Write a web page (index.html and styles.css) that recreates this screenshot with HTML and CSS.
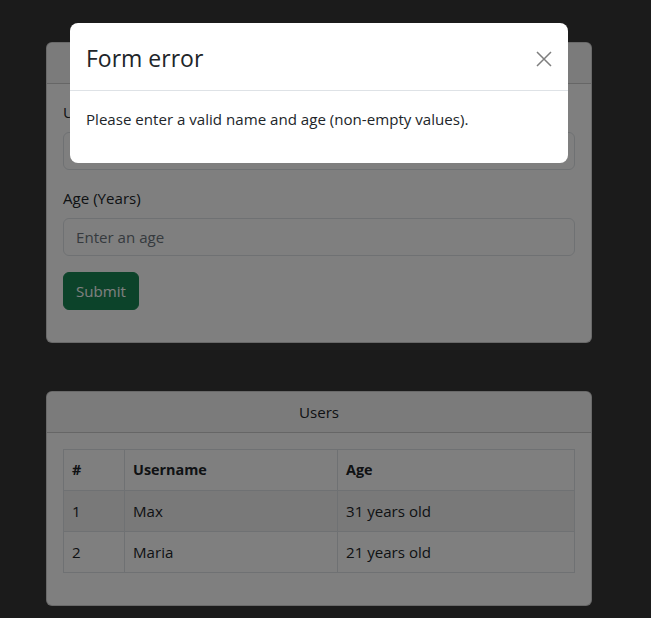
FILE: index.html
```html
<!DOCTYPE html>
<html lang="en">
<head>
    <meta charset="UTF-8">
    <meta name="viewport" content="width=device-width, initial-scale=1.0">
    <title>Users</title>
    <link rel="stylesheet" href="styles.css">
</head>
<body>
    <div class="container">
        <div class="card">
            <div class="card-header">Add User</div>
            <div class="card-body">
                <form id="userForm">
                    <div class="field">
                        <label for="username">Username</label>
                        <input type="text" id="username" class="input" placeholder="Enter a username">
                    </div>
                    <div class="field">
                        <label for="age">Age (Years)</label>
                        <input type="number" id="age" class="input" placeholder="Enter an age">
                    </div>
                    <div class="actions">
                        <button type="submit" class="button">Submit</button>
                    </div>
                </form>
            </div>
        </div>

        <div class="card">
            <div class="card-header">Users</div>
            <div class="card-body">
                <table class="users">
                    <thead>
                        <tr>
                            <th class="col-id">#</th>
                            <th class="col-name">Username</th>
                            <th>Age</th>
                        </tr>
                    </thead>
                    <tbody>
                        <tr>
                            <td>1</td>
                            <td>Max</td>
                            <td>31 years old</td>
                        </tr>
                        <tr>
                            <td>2</td>
                            <td>Maria</td>
                            <td>21 years old</td>
                        </tr>
                    </tbody>
                </table>
            </div>
        </div>
    </div>

    <!-- error modal -->
    <div class="backdrop"></div>
    <div class="modal">
        <div class="modal-dialog">
            <div class="modal-header">
                <h2 class="modal-title">Form error</h2>
                <button type="button" class="close" aria-label="Close">
                    <svg width="16" height="16" viewBox="0 0 16 16">
                        <path d="M1 1L15 15M15 1L1 15" stroke="#000" stroke-width="1.5" fill="none"/>
                    </svg>
                </button>
            </div>
            <div class="modal-body">
                <p>Please enter a valid name and age (non-empty values).</p>
            </div>
        </div>
    </div>
</body>
</html>
```

FILE: styles.css
```css
* {
    box-sizing: border-box;
}
body {
    margin: 0;
    padding: 0 13px 0 0;
    background-color: #373737;
    font-family: "Open Sans", "Noto Sans", sans-serif;
    font-size: 15.1px;
    line-height: 24px;
    color: #212529;
}
.container {
    width: 546px;
    margin: 42px auto 0;
}
.card {
    background-color: #fff;
    border: 1px solid rgba(0, 0, 0, 0.175);
    border-radius: 6px;
    margin-bottom: 48px;
}
.card:last-child {
    margin-bottom: 0;
}
.card-header {
    padding: 8px 16px;
    text-align: center;
    background-color: rgba(0, 0, 0, 0.03);
    border-bottom: 1px solid rgba(0, 0, 0, 0.175);
    border-radius: 6px 6px 0 0;
}
.card-body {
    padding: 16px;
}
.field {
    margin-bottom: 16px;
}
.field label {
    display: block;
    margin-bottom: 8px;
}
.input {
    display: block;
    width: 100%;
    height: 38px;
    padding: 6px 12px;
    font: inherit;
    color: #212529;
    border: 1px solid #dee2e6;
    border-radius: 6px;
    background-color: #fff;
}
.input::placeholder {
    color: #6c757d;
}
.actions {
    margin-bottom: 16px;
}
.button {
    height: 38px;
    padding: 6px 12px;
    font: inherit;
    color: #fff;
    background-color: #198754;
    border: 1px solid #198754;
    border-radius: 6px;
    cursor: pointer;
}
.users {
    width: 100%;
    border-collapse: collapse;
    margin-bottom: 16px;
}
.users th,
.users td {
    padding: 8px;
    text-align: left;
    border: 1px solid #dee2e6;
}
.users th {
    font-size: 14.4px;
    font-weight: bold;
}
.users .col-id {
    width: 61px;
}
.users .col-name {
    width: 213px;
}
.users tbody tr:nth-child(odd) td {
    background-color: rgba(0, 0, 0, 0.05);
}
.backdrop {
    position: fixed;
    inset: 0;
    background-color: rgba(0, 0, 0, 0.5);
}
.modal {
    position: fixed;
    inset: 0;
    padding-right: 13px;
}
.modal-dialog {
    width: 498px;
    margin: 23px auto 0;
    background-color: #fff;
    border-radius: 8px;
}
.modal-header {
    display: flex;
    align-items: center;
    justify-content: space-between;
    padding: 18px 16px 14px;
    border-bottom: 1px solid #dee2e6;
}
.modal-title {
    margin: 0;
    font-size: 23px;
    font-weight: 500;
    line-height: 35px;
}
.close {
    display: flex;
    padding: 4px;
    margin-right: -4px;
    border: none;
    background: none;
    opacity: 0.5;
    cursor: pointer;
}
.modal-body {
    padding: 16px;
}
.modal-body p {
    margin: 0 0 16px;
}
```
